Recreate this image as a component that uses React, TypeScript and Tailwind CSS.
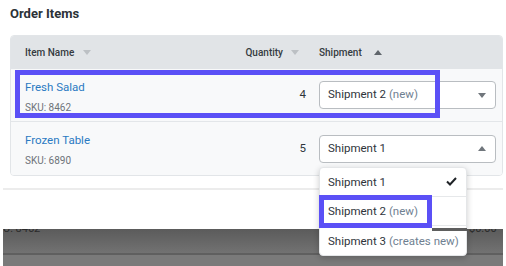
import React from 'react';

type Item = { name: string; sku: string; qty: number; shipment: string; tag?: string; open?: boolean };

const items: Item[] = [
  { name: 'Fresh Salad', sku: '8462', qty: 4, shipment: 'Shipment 2', tag: '(new)' },
  { name: 'Frozen Table', sku: '6890', qty: 5, shipment: 'Shipment 1', open: true },
];

const options = [
  { label: 'Shipment 1', checked: true },
  { label: 'Shipment 2', tag: '(new)' },
  { label: 'Shipment 3', tag: '(creates new)' },
];

// small sort / caret triangles
function Tri({ up, color }: { up?: boolean; color: string }) {
  return (
    <svg width="8" height="5" viewBox="0 0 8 5" className="shrink-0">
      <path d={up ? 'M0 5 L4 0 L8 5 Z' : 'M0 0 L8 0 L4 5 Z'} fill={color} />
    </svg>
  );
}

function Select({ item }: { item: Item }) {
  return (
    <div className="flex items-center justify-between w-[177px] h-[28px] pl-[8px] pr-[9px] bg-white border border-[#b9bdc1] rounded-[4px] text-[11.5px] text-[#2f353b] whitespace-nowrap">
      <span>
        {item.shipment}
        {item.tag && <span className="text-[#6f7f91]"> {item.tag}</span>}
      </span>
      <Tri up={item.open} color="#70767c" />
    </div>
  );
}

export default function App() {
  return (
    <div className="relative w-[506px] h-[266px] overflow-hidden bg-white font-['Roboto',sans-serif]">
      <h2 className="pl-[10px] pt-[5px] text-[13px] leading-[18px] font-bold text-[#2c3237]">Order Items</h2>

      {/* ── Table card ───────────────────────────── */}
      <div className="mt-[12px] ml-[10px] w-[493px] border border-[#e2e5e8] rounded-[4px] overflow-hidden">
        <div className="flex items-center h-[33px] pl-[14px] pr-[6px] bg-[#e1e4e7] text-[10px] font-medium text-[#353b41]">
          <div className="w-[215px] flex items-center gap-[9px]">
            Item Name <Tri color="#bcc0c4" />
          </div>
          <div className="w-[66px] flex items-center justify-end gap-[8px] pr-[7px]">
            Quantity <Tri color="#bcc0c4" />
          </div>
          <div className="ml-[13px] flex items-center gap-[12px]">
            Shipment <Tri up color="#5f656b" />
          </div>
        </div>
        {items.map((it, i) => (
          <div
            key={it.sku}
            className={`flex items-center h-[53px] pl-[14px] pr-[6px] bg-[#f8f9fa] ${i === 0 ? 'border-b border-[#e3e6e9]' : ''}`}
          >
            <div className="w-[215px] flex flex-col pt-[3px]">
              <span className="text-[11.5px] leading-[16px] text-[#2a7ac2]">{it.name}</span>
              <span className="mt-[6px] text-[10px] leading-[14px] text-[#6d7379]">SKU: {it.sku}</span>
            </div>
            <div className="w-[66px] text-right text-[11.5px] text-[#2f353b]">{it.qty}</div>
            <div className="ml-[13px]">
              <Select item={it} />
            </div>
          </div>
        ))}
      </div>

      <div className="mt-[12px] ml-[3px] w-[500px] h-[2px] bg-[#ececec]" />

      {/* ── dimmed content behind ────────────────── */}
      <div className="mt-[39px] ml-[3px] w-[500px] h-[37px] overflow-hidden flex flex-col">
        <div className="relative h-[24px] bg-gradient-to-b from-[#5b5b5b] to-[#727272]">
          <span className="absolute left-0 top-[-8px] text-[11px] text-[#2b2b2b]">U: 8462</span>
          <span className="absolute left-[466px] top-[-8px] text-[11px] text-[#2b2b2b]">$0.00</span>
        </div>
        <div className="h-[2px] bg-[#5f5f5f]" />
        <div className="flex-1 bg-[#7a7a7a]" />
      </div>

      {/* ── Open dropdown ────────────────────────── */}
      <div className="absolute left-[319px] top-[167px] w-[148px] bg-white rounded-[4px] border border-[#e4e6e8] shadow-[0_2px_6px_rgba(0,0,0,0.2)] text-[11.5px] text-[#2f353b] whitespace-nowrap">
        {options.map((o, i) => (
          <div
            key={o.label}
            className={`flex items-center justify-between h-[29px] pt-[2px] pl-[8px] pr-[9px] ${i < options.length - 1 ? 'border-b border-[#e6e8ea]' : ''}`}
          >
            <span>
              {o.label}
              {o.tag && <span className="text-[#6f7f91]"> {o.tag}</span>}
            </span>
            {o.checked && (
              <svg width="11" height="9" viewBox="0 0 11 9" className="-mt-[3px]">
                <path d="M1 4.5 L4 7.5 L10 1" fill="none" stroke="#1f2327" strokeWidth="2" />
              </svg>
            )}
          </div>
        ))}
      </div>
      {/* strip of the dimmed layer showing through the menu edge */}
      <div className="absolute left-[432px] top-[228px] w-[35px] h-[3px] bg-[#5e5e5e]" />

      {/* ── Callout highlights ───────────────────── */}
      <div className="absolute left-[15px] top-[70px] w-[425px] h-[48px] border-[5px] border-[#5b50f6]" />
      <div className="absolute left-[319px] top-[195px] w-[113px] h-[33px] border-[5px] border-[#5b50f6]" />
    </div>
  );
}
